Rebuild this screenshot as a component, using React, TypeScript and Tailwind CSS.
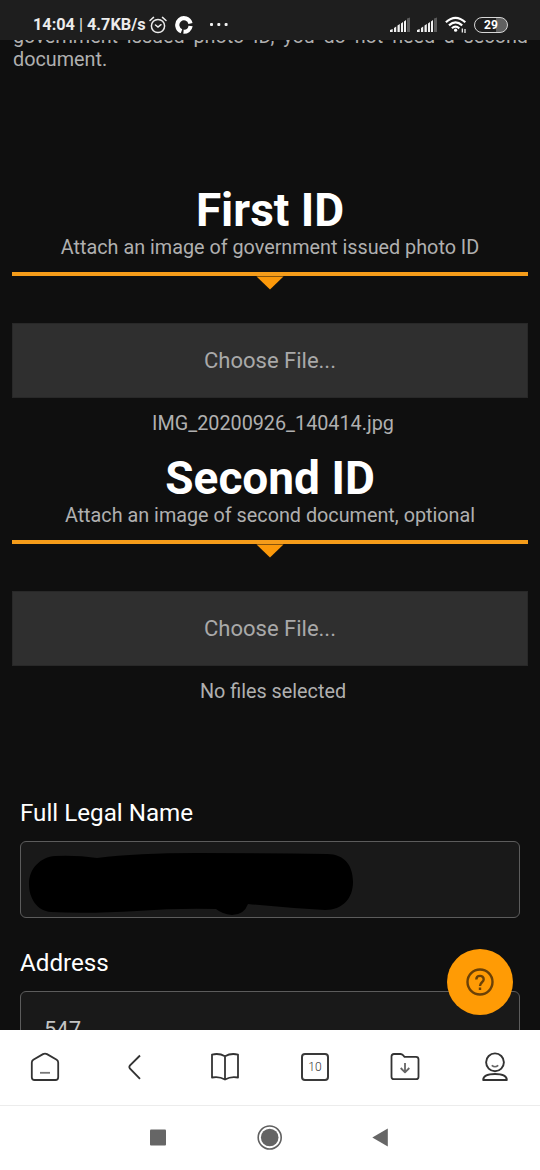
import type { ReactNode } from "react";

interface UploadProps {
  title: string;
  hint: string;
  status: string;
}

function UploadSection({ title, hint, status }: UploadProps) {
  return (
    <section className="mb-[19px] text-center">
      <h2 className="pb-1 text-[46px] leading-[44px] font-bold text-white">{title}</h2>
      <p className="text-[19.8px] leading-6 text-[#b0b0b0]">{hint}</p>
      <div className="mt-3 h-1 bg-[#f59c1a]" />
      <svg className="mx-auto block" width="28" height="14" viewBox="0 0 28 14">
        <path d="M0.5 0.6H27.5L14 13.6Z" fill="#fb980a" />
      </svg>
      <button className="mt-[33px] flex h-[75px] w-full items-center justify-center border border-[#282828] bg-[#2f2f2f] text-[22px] text-[#a9a9a9]">
        Choose File...
      </button>
      <p className="mt-[13px] pl-1.5 text-[19.8px] leading-[26px] text-[#b0b0b0]">{status}</p>
    </section>
  );
}

function Field({ label, children }: { label: string; children?: ReactNode }) {
  return (
    <div className="mb-[31px] px-2">
      <label className="block text-[24.2px] leading-7 text-white">{label}</label>
      <div className="mt-3.5 flex h-[77px] items-center rounded-md border border-[#5c5c5c] bg-[#191919] pl-[23px] text-[22px] text-[#c4c4c4]">
        {children}
      </div>
    </div>
  );
}

function Signal() {
  return (
    <svg width="21" height="16" viewBox="0 0 21 16">
      <path d="M0 15V13L2.7 12V15ZM4 15V11L6.2 9.5V15ZM7.5 15V8.5L9.8 7V15ZM11 15V6.5L13 5V15ZM14 15V4.5L16 3V15Z" fill="#f2f2f2" />
      <path d="M17 15V1.5L20 .5V15Z" fill="#5b5b5b" />
    </svg>
  );
}

function StatusBar() {
  return (
    <header className="flex h-10 items-center bg-[#1e1e1e] pt-2.5 pl-[33px] pr-8 text-[#ececec]">
      <span className="text-[16.3px] leading-5 font-bold whitespace-pre">
        14:04 <span className="font-normal">|</span> 4.7KB/s
      </span>
      <svg className="ml-[3px]" width="18" height="18" viewBox="0 0 18 18" fill="none" stroke="currentColor" strokeWidth="1.5" strokeLinecap="round">
        <circle cx="9" cy="10" r="6.6" />
        <path d="M1 4.5 4.5 1.4M17 4.5 13.5 1.4M6.5 9 9 11 12 8.7" />
      </svg>
      <svg className="ml-2" width="18" height="18" viewBox="0 0 18 18" fill="none" stroke="#fff" strokeWidth="4.2">
        <path d="M15.5 7.5A6.7 6.7 0 1 0 6.5 15.2" />
        <path d="M8.5 15.7A6.7 6.7 0 0 0 15.6 10" />
      </svg>
      <svg className="ml-[17px]" width="18" height="4" viewBox="0 0 18 4" fill="#f2f2f2">
        <rect x="0" y="0" width="3" height="3" rx="1" />
        <rect x="7.3" y="0" width="3" height="3" rx="1" />
        <rect x="14.6" y="0" width="3" height="3" rx="1" />
      </svg>
      <div className="ml-auto flex items-center">
        <Signal />
        <span className="ml-1.5 flex"><Signal /></span>
        <svg className="ml-[7px]" width="22" height="18" viewBox="0 0 22 18" fill="none" stroke="#fff" strokeWidth="2.2">
          <path d="M.9 6.2Q10.5-2.6 20.3 6.2M4 9.4Q10.5 3.4 17.2 9.4M6.9 12.3Q10.5 9 14.3 12.3" />
          <circle cx="10.6" cy="14.2" r="1.6" fill="#fff" stroke="none" />
          <path d="M17.3 12.5V16.5M20 13V17" strokeWidth="1.2" />
        </svg>
        <div className="ml-[7px] flex h-4 w-[34px] items-center justify-center rounded-full border-[1.5px] border-[#d6d6d6] bg-linear-to-r from-[#1e1e1e] from-65% to-[#606060] to-65% text-[12px] leading-none font-bold text-white">
          29
        </div>
      </div>
    </header>
  );
}

function BrowserBar() {
  return (
    <nav className="flex h-[76px] items-center justify-around border-b border-[#ececec] bg-white pb-px text-[#333]">
      <svg width="30" height="30" viewBox="0 0 30 30" fill="none" stroke="currentColor" strokeWidth="1.8">
        <path d="M1.8 10.5Q1.8 8.7 3.3 7.7L13 2.1Q15 1 17 2.1L26.7 7.7Q28.2 8.7 28.2 10.5V25.2Q28.2 28 25.4 28H4.6Q1.8 28 1.8 25.2Z" />
        <path d="M10 20.8H20" stroke="#777" />
      </svg>
      <svg width="30" height="30" viewBox="0 0 30 30" fill="none" stroke="currentColor" strokeWidth="1.9">
        <path d="M20 3.5 9.8 13.6Q8.8 15 9.8 16.4L20 26.8" />
      </svg>
      <svg width="30" height="30" viewBox="0 0 30 30" fill="none" stroke="currentColor" strokeWidth="1.8" strokeLinejoin="round">
        <path d="M15 4.2Q9 .8 2 2.6V25.5Q9 24 15 27.5Q21 24 28 25.5V2.6Q21 .8 15 4.2ZM15 4.2V27.5" />
      </svg>
      <div className="flex size-[30px] items-center justify-center">
        <div className="flex size-7 items-center justify-center rounded-[4px] border-2 border-[#3a3a3a] text-[12px] font-light text-[#333]">
          10
        </div>
      </div>
      <svg width="30" height="30" viewBox="0 0 30 30" fill="none" stroke="currentColor" strokeWidth="1.8" strokeLinejoin="round">
        <path d="M1.5 4.5Q1.5 2 4 2H10.5Q12 2 13 3.2L14.5 4.8H26Q28.5 4.8 28.5 7.3V24.7Q28.5 27.2 26 27.2H4Q1.5 27.2 1.5 24.7Z" />
        <path d="M15 11V20M10.7 16 15 20.3 19.3 16" stroke="#666" />
      </svg>
      <svg width="30" height="30" viewBox="0 0 30 30" fill="none" stroke="currentColor" strokeWidth="1.9" strokeLinejoin="round">
        <circle cx="15" cy="10.3" r="8.9" />
        <path d="M3.2 28Q3.2 22 15 22T26.8 28Z" />
        <path d="M11.7 13.3Q15 16 18.3 13.3" stroke="#666" strokeWidth="1.5" />
      </svg>
    </nav>
  );
}

function SystemBar() {
  return (
    <div className="flex h-16 items-center justify-center gap-[81px] bg-white pb-0.5">
      <svg width="30" height="30" viewBox="0 0 30 30">
        <rect x="6" y="7.5" width="16" height="16" rx="1" fill="#666" />
      </svg>
      <svg width="30" height="30" viewBox="0 0 30 30">
        <circle cx="14.7" cy="15.5" r="11.5" fill="none" stroke="#606060" strokeWidth="1.6" />
        <circle cx="14.7" cy="15.5" r="8.8" fill="#646464" />
      </svg>
      <svg width="30" height="30" viewBox="0 0 30 30">
        <path d="M6.3 15.5 21.8 6.5V24.5Z" fill="#666" />
      </svg>
    </div>
  );
}

export default function App() {
  return (
    <div className="relative flex h-[1170px] w-[540px] flex-col overflow-hidden bg-[#0f0f0f] font-[Roboto,sans-serif]">
      <StatusBar />
      <main className="h-[990px] overflow-hidden px-3">
        <div className="-mt-[14px] mb-[117px] pl-px text-[19.8px] leading-[22px] text-[#b0b0b0]">
          <p className="[text-align-last:justify]">government issued photo ID, you do not need a second</p>
          <p className="mt-px">document.</p>
        </div>

        <UploadSection
          title="First ID"
          hint="Attach an image of government issued photo ID"
          status="IMG_20200926_140414.jpg"
        />
        <UploadSection
          title="Second ID"
          hint="Attach an image of second document, optional"
          status="No files selected"
        />

        <div className="mt-[94px]">
          <Field label="Full Legal Name">
            <svg className="mt-[7px] -ml-[17px]" width="328" height="64" viewBox="0 0 328 64">
              <path d="M28 5Q50 4 70 7Q110 2 170 2Q240 2 300 3C318 3 326 15 326 31C326 47 316 59 298 59Q260 57 221 53Q217 64 205 64Q195 63 189 58Q150 57 110 60Q60 63 24 61C10 60 2 47 2 33C2 17 14 6 28 5Z" fill="#000" />
            </svg>
          </Field>
          <Field label="Address">547</Field>
        </div>
      </main>
      <BrowserBar />
      <SystemBar />

      {/* floating help button */}
      <button className="absolute top-[949px] left-[447px] flex size-[66px] items-center justify-center rounded-full bg-[#ff9b05] text-[#6b4107]">
        <svg width="28" height="28" viewBox="0 0 28 28" fill="none" stroke="currentColor" strokeWidth="2.4">
          <circle cx="14" cy="14" r="12.5" />
          <path d="M10.3 11.5C10.3 6.7 17.7 6.7 17.7 11.3C17.7 14.3 14 14.3 14 18" />
          <path d="M14 19.5V22" />
        </svg>
      </button>
    </div>
  );
}
